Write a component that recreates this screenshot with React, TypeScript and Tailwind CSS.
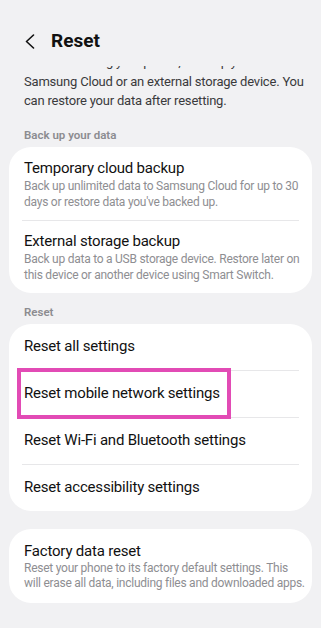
import React from "react";

const font = { fontFamily: "Roboto, 'Noto Sans', sans-serif" };

function Divider() {
  return <div className="mx-[13px] h-px bg-[#e7e7e9]" />;
}

function Lines({ lines, className }: { lines: string[]; className: string }) {
  return (
    <div className={className}>
      {lines.map((l, i) => (
        <div key={i} className="whitespace-nowrap">
          {l}
        </div>
      ))}
    </div>
  );
}

const sub = "text-[12px] leading-[16px] text-[#8e8e92] tracking-[-0.25px]";
const title = "text-[15px] leading-[19px] text-[#111] tracking-[-0.2px]";
const row = "h-[46px] px-[15px] flex items-center text-[15px] text-[#111] tracking-[-0.2px]";

export default function App() {
  return (
    <div className="w-full h-[628px] bg-[#f1f1f3] overflow-hidden flex flex-col" style={font}>
      <div className="h-[66px] shrink-0 flex items-start pl-[25px] pt-[28px]">
        <svg width="10" height="15" viewBox="0 0 10 15" className="mt-[6px]">
          <polyline points="8.5,1 1.5,7.5 8.5,14" fill="none" stroke="#111" strokeWidth="1.6" strokeLinecap="round" strokeLinejoin="round" />
        </svg>
        <div className="ml-[16px] text-[19px] leading-[26px] font-bold text-[#111]">Reset</div>
      </div>
      <div className="flex-1 overflow-hidden">
        <Lines
          className="-mt-[14px] px-[24px] text-[13px] leading-[19.5px] text-[#3a3a3c] tracking-[-0.2px]"
          lines={[
            "Before resetting your phone, back up your data to",
            "Samsung Cloud or an external storage device. You",
            "can restore your data after resetting.",
          ]}
        />
        <div className="mt-[16px] px-[24px] text-[11.5px] leading-[16px] font-semibold text-[#8c8c90]">Back up your data</div>
        <div className="mt-[4px] mx-[9px] bg-white rounded-[22px]">
          <div className="px-[15px] pt-[12px] pb-[10px]">
            <div className={title}>Temporary cloud backup</div>
            <Lines
              className={sub}
              lines={["Back up unlimited data to Samsung Cloud for up to 30", "days or restore data you've backed up."]}
            />
          </div>
          <Divider />
          <div className="px-[15px] pt-[11px] pb-[10px]">
            <div className={title}>External storage backup</div>
            <Lines
              className={sub}
              lines={["Back up data to a USB storage device. Restore later on", "this device or another device using Smart Switch."]}
            />
          </div>
        </div>
        <div className="mt-[11px] px-[24px] text-[11.5px] leading-[16px] font-semibold text-[#8c8c90]">Reset</div>
        <div className="mt-[4px] mx-[9px] bg-white rounded-[22px]">
          <div className={row}>Reset all settings</div>
          <Divider />
          <div className={"relative " + row}>
            Reset mobile network settings
            <div className="absolute left-[8px] top-[-3px] w-[214px] h-[51px] border-[4px] border-[#e24bb5]" />
          </div>
          <Divider />
          <div className={row}>Reset Wi-Fi and Bluetooth settings</div>
          <Divider />
          <div className={row}>Reset accessibility settings</div>
        </div>
        <div className="mt-[18px] mx-[9px] bg-white rounded-[22px] px-[15px] pt-[13px] pb-[12px]">
          <div className={title}>Factory data reset</div>
          <Lines
            className="text-[12px] leading-[15px] text-[#8e8e92] tracking-[-0.25px]"
            lines={["Reset your phone to its factory default settings. This", "will erase all data, including files and downloaded apps."]}
          />
        </div>
      </div>
    </div>
  );
}
